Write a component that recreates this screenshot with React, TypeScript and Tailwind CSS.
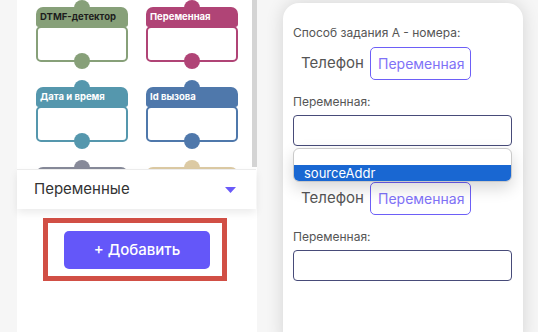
import React from 'react';

const tiles = [
  { title: 'DTMF-детектор', color: '#87a079', dark: true },
  { title: 'Переменная', color: '#b04476', dark: false },
  { title: 'Дата и время', color: '#5597ad', dark: false },
  { title: 'Id вызова', color: '#4f78ab', dark: false },
  { title: '', color: '#878a99', dark: false },
  { title: '', color: '#dccaa4', dark: false },
];

const Tile = ({ title, color, dark }: { title: string; color: string; dark: boolean }) => (
  <div className="relative h-[80px] pt-[7px]">
    <div
      className="absolute top-0 left-1/2 -translate-x-1/2 w-[16px] h-[16px] rounded-full"
      style={{ backgroundColor: color }}
    />
    <div
      className={`relative h-[20px] rounded-t-[7px] rounded-b-[3px] pl-[4px] flex items-center text-[9.5px] font-bold leading-none ${dark ? 'text-[#1d1d1d]' : 'text-white'}`}
      style={{ backgroundColor: color }}
    >
      {title}
    </div>
    <div className="h-[36px] border-2 rounded-[5px] bg-white -mt-[1px]" style={{ borderColor: color }} />
    <div
      className="absolute top-[53px] left-1/2 -translate-x-1/2 w-[16px] h-[16px] rounded-full"
      style={{ backgroundColor: color }}
    />
  </div>
);

// label can be empty when the select popup covers it
const NumberGroup = ({ label }: { label: string }) => (
  <div className="flex flex-col">
    <div className="h-[16px] text-[12px] leading-[16px] text-[#555]">{label}</div>
    <div className="flex items-center mt-[6px] gap-[2px]">
      <div className="h-[33px] w-[75px] pl-[8px] flex items-center text-[15px] text-[#555]">Телефон</div>
      <div className="h-[33px] w-[101px] pl-[7px] flex items-center border border-[#6d5ff7] rounded-[5px] text-[14px] text-[#7f72f7]">
        Переменная
      </div>
    </div>
    <div className="text-[12px] leading-[16px] text-[#555] mt-[14px]">Переменная:</div>
    <div className="h-[31px] mt-[5px] border border-[#474b79] rounded-[4px] bg-white" />
  </div>
);

export default function App() {
  return (
    <div
      className="w-[538px] h-[332px] bg-[#f6f6f6] flex overflow-hidden"
      style={{ fontFamily: 'Inter, "Noto Sans", sans-serif' }}
    >
      <div className="ml-[17px] w-[240px] h-full bg-white flex flex-col">
        <div className="h-[169px] flex overflow-hidden">
          <div className="flex-1 pl-[19px]">
            <div className="grid grid-cols-[92px_92px] gap-x-[18px]">
              {tiles.map((t, i) => (
                <Tile key={i} {...t} />
              ))}
            </div>
          </div>
          <div className="w-[5px] h-[167px] bg-[#d4d4d4]" />
        </div>
        <div className="relative z-10 h-[40px] w-[239px] bg-white border-t border-[#ececec] shadow-[0_4px_8px_rgba(0,0,0,0.08)] flex items-center justify-between pl-[17px] pr-[20px]">
          <span className="text-[15px] text-[#333]">Переменные</span>
          <svg width="11" height="6" viewBox="0 0 11 6">
            <path d="M0 0H11L5.5 6Z" fill="#6a5af9" />
          </svg>
        </div>
        <div className="ml-[26px] mt-[9px] w-[184px] h-[63px] border-[5px] border-[#d14f45] pl-[16px] pt-[8px]">
          <button className="w-[146px] h-[38px] bg-[#6457f9] rounded-[5px] text-white text-[15px] font-medium">
            + Добавить
          </button>
        </div>
      </div>

      <div className="ml-[26px] mt-[3px] w-[240px] h-[340px] bg-white rounded-t-[16px] shadow-[0_0_18px_rgba(0,0,0,0.14)] pl-[10px] pr-[11px] pt-[22px]">
        <div className="relative flex flex-col">
          <NumberGroup label="Способ задания А - номера:" />
          <div className="mt-[14px]">
            <NumberGroup label="" />
          </div>
          <div className="absolute left-0 right-0 top-[123px] h-[34px] bg-white border border-[#c9c9c9] rounded-[6px] overflow-hidden shadow-[0_6px_16px_rgba(0,0,0,0.16)] flex flex-col">
            <div className="h-[16px]" />
            <div className="h-[16px] bg-[#1967d2] text-white text-[13px] leading-[16px] pl-[10px]">sourceAddr</div>
          </div>
        </div>
      </div>
    </div>
  );
}
